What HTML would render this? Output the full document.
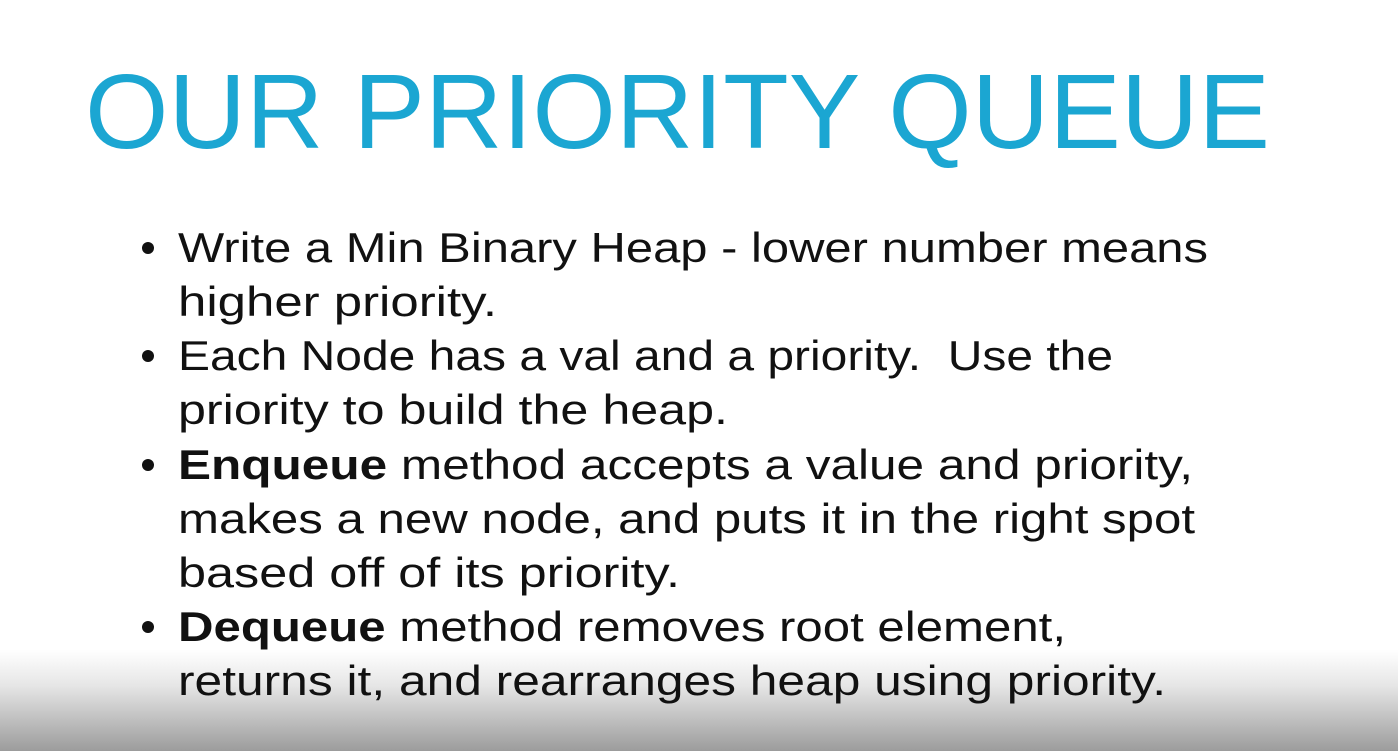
<!DOCTYPE html>
<html><head><meta charset="utf-8"><style>
html,body{margin:0;padding:0;width:1398px;height:751px;overflow:hidden;background:#fff}
</style></head><body>
<svg width="1398" height="751" viewBox="0 0 1398 751" xmlns="http://www.w3.org/2000/svg">
<defs><linearGradient id="g" x1="0" y1="0" x2="0" y2="1">
<stop offset="0" stop-color="#ffffff"/><stop offset="0.35" stop-color="#e6e6e6"/><stop offset="1" stop-color="#9c9c9c"/></linearGradient></defs>
<rect width="1398" height="751" fill="#fff"/>
<rect x="0" y="650" width="1398" height="101" fill="url(#g)"/>
<text x="85" y="148" font-family="Liberation Sans, sans-serif" font-size="106" fill="#1ba6d2" textLength="1185" lengthAdjust="spacingAndGlyphs">OUR PRIORITY QUEUE</text>
<g font-family="Liberation Sans, sans-serif" font-size="42" fill="#111">
<circle cx="148" cy="248" r="6" fill="#111"/>
<circle cx="148" cy="356" r="6" fill="#111"/>
<circle cx="148" cy="465" r="6" fill="#111"/>
<circle cx="148" cy="627" r="6" fill="#111"/>
<text x="178" y="262" textLength="1030" lengthAdjust="spacingAndGlyphs">Write a Min Binary Heap - lower number means</text>
<text x="178" y="316" textLength="319" lengthAdjust="spacingAndGlyphs">higher priority.</text>
<text x="178" y="370" textLength="935" lengthAdjust="spacingAndGlyphs" xml:space="preserve">Each Node has a val and a priority.  Use the</text>
<text x="178" y="424" textLength="550" lengthAdjust="spacingAndGlyphs">priority to build the heap.</text>
<text x="178" y="479" textLength="1015" lengthAdjust="spacingAndGlyphs"><tspan font-weight="bold">Enqueue</tspan> method accepts a value and priority,</text>
<text x="178" y="533" textLength="1017" lengthAdjust="spacingAndGlyphs">makes a new node, and puts it in the right spot</text>
<text x="178" y="587" textLength="502" lengthAdjust="spacingAndGlyphs">based off of its priority.</text>
<text x="178" y="641" textLength="888" lengthAdjust="spacingAndGlyphs"><tspan font-weight="bold">Dequeue</tspan> method removes root element,</text>
<text x="178" y="695" textLength="988" lengthAdjust="spacingAndGlyphs">returns it, and rearranges heap using priority.</text>
</g>
</svg>
</body></html>
